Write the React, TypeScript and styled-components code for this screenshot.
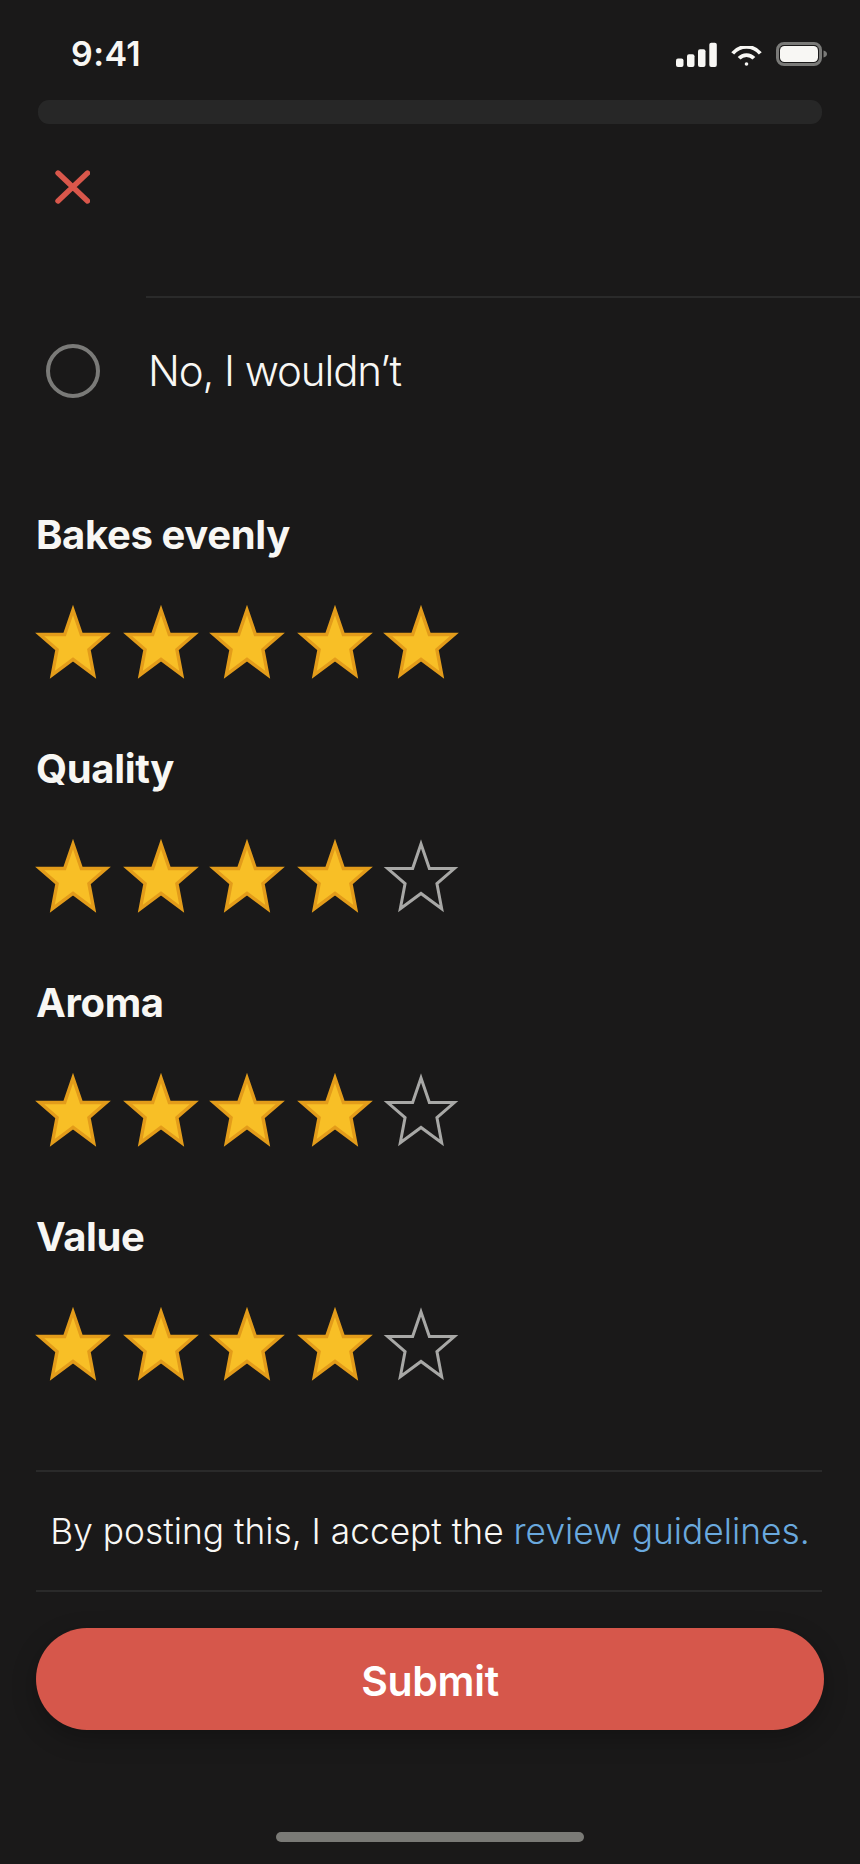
import React from 'react';
import styled, { createGlobalStyle } from 'styled-components';

const GlobalStyle = createGlobalStyle`
  html, body {
    margin: 0;
    padding: 0;
    background: #1a1919;
  }
  * {
    box-sizing: border-box;
  }
`;

const Screen = styled.div`
  width: 860px;
  height: 1864px;
  overflow: hidden;
  background: #1a1919;
  color: #f8f7f4;
  font-family: Inter, "Liberation Sans", sans-serif;
`;

const StatusBar = styled.div`
  height: 100px;
  padding: 8px 33px 0 71px;
  display: flex;
  align-items: center;
  justify-content: space-between;
`;

const Time = styled.span`
  margin-top: -2px;
  font-size: 34px;
  font-weight: 600;
  letter-spacing: 0.4px;
`;

const StatusIcons = styled.div`
  display: flex;
  align-items: center;
  gap: 14px;
`;

const SignalSvg = styled.svg`
  margin-left: -1px;
`;

const WifiSvg = styled.svg`
  margin-top: 3px;
`;

const SearchBar = styled.div`
  height: 24px;
  margin: 0 38px;
  border-radius: 11px;
  background: #272727;
`;

const CloseButton = styled.button`
  display: block;
  margin: 46px 0 0 55px;
  padding: 0;
  width: 35px;
  height: 34px;
  border: 0;
  background: none;
`;

const OptionDivider = styled.div`
  height: 2px;
  margin: 92px 0 0 146px;
  background: #2a2a2a;
`;

const OptionRow = styled.div`
  display: flex;
  align-items: center;
  gap: 48px;
  margin: 46px 0 0 46px;
  height: 54px;
`;

const Radio = styled.span`
  width: 54px;
  height: 54px;
  border: 4px solid #7a7a78;
  border-radius: 50%;
`;

const OptionLabel = styled.span`
  margin-top: -2px;
  font-size: 42px;
  font-weight: 340;
  letter-spacing: -1.1px;
`;

const Ratings = styled.div`
  display: flex;
  flex-direction: column;
  gap: 67px;
  margin: 113px 0 0 36px;
`;

const RatingLabel = styled.div`
  height: 48px;
  line-height: 48px;
  font-size: 40px;
  font-weight: 700;
  letter-spacing: -0.35px;
`;

const Stars = styled.div`
  display: flex;
  gap: 13px;
  margin-top: 47px;
`;

const StarIcon = styled.svg`
  display: block;
  width: 74px;
  height: 72px;
  overflow: visible;

  &:nth-child(even) {
    transform: translateX(1px);
  }
`;

const StarShape = styled.polygon<{ $filled: boolean }>`
  fill: ${(p) => (p.$filled ? '#f8bf26' : 'none')};
  stroke: ${(p) => (p.$filled ? '#e39c1a' : '#a8a8a6')};
  stroke-width: ${(p) => (p.$filled ? 3.4 : 3)}px;
  stroke-linejoin: miter;
  stroke-miterlimit: 4;
`;

const Rule = styled.div`
  height: 2px;
  margin: 0 38px 0 36px;
  background: #2a2a2a;
`;

const Footer = styled.div`
  margin-top: 90px;
`;

const Terms = styled.p`
  height: 118px;
  margin: 0;
  display: flex;
  align-items: center;
  justify-content: center;
  font-size: 35.3px;
  font-weight: 330;
  white-space: pre;
`;

const TermsLink = styled.a`
  color: #6aa9de;
`;

const SubmitButton = styled.button`
  display: block;
  width: 788px;
  height: 102px;
  margin: 36px 0 0 36px;
  padding: 4px 0 0;
  border: 0;
  border-radius: 51px;
  background: #d6574b;
  box-shadow: 0 8px 24px rgba(0, 0, 0, 0.25);
  color: #fff;
  font-family: inherit;
  font-size: 41px;
  font-weight: 600;
  letter-spacing: -0.3px;
`;

const HomeIndicator = styled.div`
  width: 308px;
  height: 10px;
  margin: 102px auto 0;
  border-radius: 5px;
  background: #7a7a76;
`;

// outline measured on the reference, pulled in so the stroke ends on the outer edge
const STAR_OUTLINE = [
  [37, 0], [46.3, 27.3], [74, 27.3], [54.7, 44], [60, 72],
  [37, 55], [14, 72], [19.3, 44], [0, 27.3], [27.7, 27.3],
];
const STAR_POINTS = STAR_OUTLINE
  .map(([x, y]) => `${37 + (x - 37) * 0.9},${39.5 + (y - 39.5) * 0.9}`)
  .join(' ');

const Star = ({ filled }: { filled: boolean }) => (
  <StarIcon viewBox="0 0 74 72">
    <StarShape $filled={filled} points={STAR_POINTS} />
  </StarIcon>
);

const ratings = [
  { label: 'Bakes evenly', value: 5 },
  { label: 'Quality', value: 4 },
  { label: 'Aroma', value: 4 },
  { label: 'Value', value: 4 },
];

const SignalIcon = () => (
  <SignalSvg width="41" height="25" viewBox="0 0 41 25" fill="#f8f7f4">
    <rect x="0" y="16.5" width="7.5" height="8.5" rx="2" />
    <rect x="11" y="12.3" width="7.5" height="12.7" rx="2" />
    <rect x="22" y="7.3" width="7.5" height="17.7" rx="2" />
    <rect x="33.3" y="0.7" width="7.5" height="24.3" rx="2" />
  </SignalSvg>
);

const WifiIcon = () => (
  <WifiSvg width="31" height="20" viewBox="0 0 31 20" fill="none" stroke="#f8f7f4" strokeWidth="3.8">
    <path d="M1.7 7.4A18 18 0 0 1 29.3 7.4" />
    <path d="M8.1 12.3A10 10 0 0 1 22.9 12.3" />
    <circle cx="15.5" cy="18" r="1.8" fill="#f8f7f4" stroke="none" />
  </WifiSvg>
);

const BatteryIcon = () => (
  <svg width="51" height="24" viewBox="0 0 51 24">
    <rect x="1.5" y="1.5" width="43" height="21" rx="6.5" fill="none" stroke="#7a7a78" strokeWidth="3" />
    <rect x="4" y="4" width="38" height="16" rx="4.5" fill="#f8f7f4" />
    <path d="M47.5 8.5c2 .5 3.5 1.8 3.5 3.5s-1.5 3-3.5 3.5z" fill="#7a7a78" />
  </svg>
);

const CloseIcon = () => (
  <svg width="35" height="34" viewBox="0 0 35 34" fill="none" stroke="#d9574b" strokeWidth="5.4" strokeLinecap="round">
    <path d="M3 3L32.5 31M32.5 3L3 31" />
  </svg>
);

const App = () => (
  <Screen>
    <GlobalStyle />
    <StatusBar>
      <Time>9:41</Time>
      <StatusIcons>
        <SignalIcon />
        <WifiIcon />
        <BatteryIcon />
      </StatusIcons>
    </StatusBar>
    <SearchBar />
    <CloseButton>
      <CloseIcon />
    </CloseButton>
    <OptionDivider />
    <OptionRow>
      <Radio />
      <OptionLabel>No, I wouldn’t</OptionLabel>
    </OptionRow>
    <Ratings>
      {ratings.map((r) => (
        <div key={r.label}>
          <RatingLabel>{r.label}</RatingLabel>
          <Stars>
            {[1, 2, 3, 4, 5].map((n) => (
              <Star key={n} filled={n <= r.value} />
            ))}
          </Stars>
        </div>
      ))}
    </Ratings>
    <Footer>
      <Rule />
      <Terms>
        By posting this, I accept the <TermsLink>review guidelines.</TermsLink>
      </Terms>
      <Rule />
      <SubmitButton>Submit</SubmitButton>
    </Footer>
    <HomeIndicator />
  </Screen>
);

export default App;
